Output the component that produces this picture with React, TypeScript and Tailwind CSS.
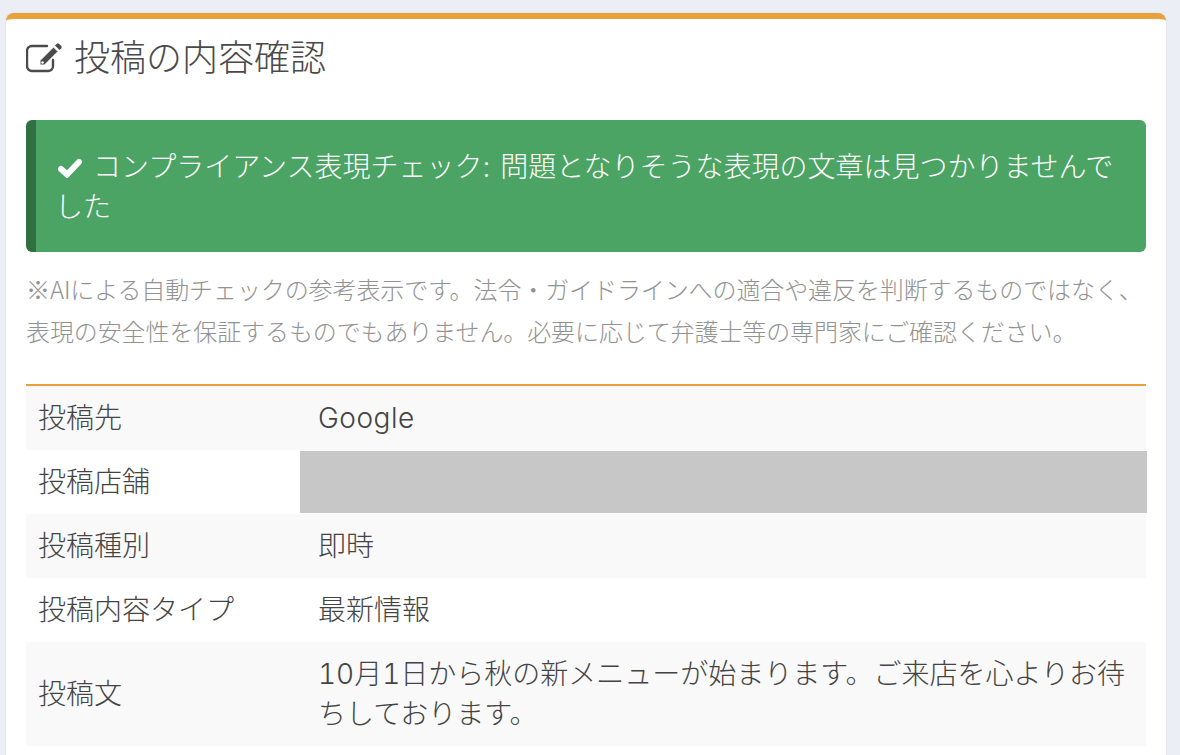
const rows = [
  { label: "投稿先", value: "Google", striped: true, latin: true },
  { label: "投稿店舗", hidden: true },
  { label: "投稿種別", value: "即時", striped: true },
  { label: "投稿内容タイプ", value: "最新情報" },
  {
    label: "投稿文",
    value: "10月1日から秋の新メニューが始まります。ご来店を心よりお待ちしております。",
    striped: true,
  },
];

function EditIcon() {
  return (
    <svg viewBox="0 0 37 31" className="mt-[9px] mr-[12px] h-[31px] w-[37px] shrink-0 text-[#4a4a4a]">
      <path
        d="M27 18v6a5 5 0 0 1-5 5H6a5 5 0 0 1-5-5V9a5 5 0 0 1 5-5h15"
        fill="none"
        stroke="currentColor"
        strokeWidth="2.4"
        strokeLinecap="round"
      />
      <path
        d="M14 18.500 27.500 5l4.500 4.500L18.500 23H14z"
        fill="currentColor"
        stroke="#ffffff"
        strokeWidth="1"
      />
      <circle cx="16.500" cy="20.500" r="1.300" fill="#ffffff" />
      <path d="M29 3.500l1.800-1.800a1.500 1.500 0 0 1 2.100 0l2.400 2.400a1.500 1.500 0 0 1 0 2.100L33.500 8z" fill="currentColor" />
    </svg>
  );
}

function CheckIcon() {
  return (
    <svg viewBox="0 0 24 19" className="mr-[11px] ml-[3px] inline-block h-[19px] w-[24px] align-[-1px]">
      <path d="M3 10l6 5.500L21 3" fill="none" stroke="currentColor" strokeWidth="6" strokeLinejoin="miter" strokeLinecap="round" />
    </svg>
  );
}

export default function App() {
  return (
    <div className="h-[755px] overflow-hidden bg-[#ebeef4] pt-[13px] pl-[6px] pr-[14px] font-['Inter','Noto_Sans_CJK_JP',sans-serif] font-light">
      <div className="h-[800px] rounded-t-[8px] border-t-[6px] border-[#e8a13c] bg-white px-[20px] shadow-[0_0_2px_rgba(0,0,0,0.12)]">
        <h2 className="flex h-[101px] items-start pt-[14px] text-[36px] leading-[50px] font-light text-[#4a4a4a]">
          <EditIcon />
          <span className="-ml-px">投稿の内容確認</span>
        </h2>

        <div className="rounded-[6px] border-l-[10px] border-[#2f6f42] bg-[#4ba463] pt-[27px] pr-[20px] pb-[25px] pl-[19px] text-[28px] leading-[40px] text-white [word-spacing:2px]">
          <CheckIcon />
          コンプライアンス表現チェック: 問題となりそうな表現の文章は見つかりませんでした
        </div>

        <p className="mt-[16px] mb-[32px] font-['Noto_Sans_CJK_JP',sans-serif] text-[24px] leading-[42px] tracking-[-0.1px] text-[#929292]">
          ※AIによる自動チェックの参考表示です。法令・ガイドラインへの適合や違反を判断するものではなく、表現の安全性を保証するものでもありません。必要に応じて弁護士等の専門家にご確認ください。
        </p>

        <div className="border-t-2 border-[#e8a13c] text-[28px] leading-[40px] text-[#444444]">
          {rows.map((row) => (
            <div
              key={row.label}
              className={`grid grid-cols-[274px_1fr] ${row.striped ? "bg-[#f9f9f9]" : ""}`}
            >
              <div className="flex items-center py-[12px] pl-[12px]">{row.label}</div>
              {row.hidden ? (
                <div className="my-px -mr-px h-[62px] bg-[#c7c7c7]" />
              ) : (
                <div className={`py-[12px] px-[18px] tabular-nums ${row.latin ? "tracking-[0.5px]" : ""}`}>
                  {row.value}
                </div>
              )}
            </div>
          ))}
        </div>
      </div>
    </div>
  );
}
